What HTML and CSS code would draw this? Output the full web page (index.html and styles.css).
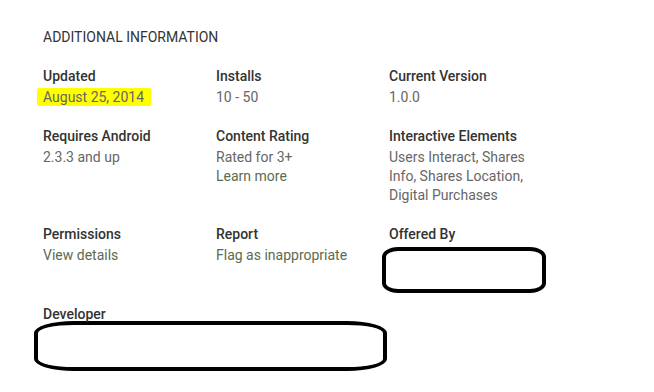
FILE: index.html
```html
<!DOCTYPE html>
<html lang="en">
<head>
    <meta charset="UTF-8">
    <meta name="viewport" content="width=device-width, initial-scale=1.0">
    <title>Additional Information</title>
    <link rel="stylesheet" href="styles.css">
</head>
<body>
    <div class="details">
        <h2 class="heading">ADDITIONAL INFORMATION</h2>
        <div class="meta-grid">
            <div class="meta">
                <div class="title">Updated</div>
                <div class="content"><span class="marker">August 25, 2014</span></div>
            </div>
            <div class="meta">
                <div class="title">Installs</div>
                <div class="content">10 - 50</div>
            </div>
            <div class="meta">
                <div class="title">Current Version</div>
                <div class="content">1.0.0</div>
            </div>

            <div class="meta">
                <div class="title">Requires Android</div>
                <div class="content">2.3.3 and up</div>
            </div>
            <div class="meta">
                <div class="title">Content Rating</div>
                <div class="content">Rated for 3+</div>
                <div class="content link">Learn more</div>
            </div>
            <div class="meta">
                <div class="title">Interactive Elements</div>
                <div class="content">Users Interact, Shares Info, Shares Location, Digital Purchases</div>
            </div>

            <div class="meta">
                <div class="title">Permissions</div>
                <div class="content link">View details</div>
            </div>
            <div class="meta">
                <div class="title">Report</div>
                <div class="content link">Flag as inappropriate</div>
            </div>
            <div class="meta">
                <div class="title">Offered By</div>
                <div class="scribble offered"></div>
            </div>
        </div>
        <div class="meta developer">
            <div class="title">Developer</div>
            <div class="scribble dev"></div>
        </div>
    </div>
</body>
</html>
```

FILE: styles.css
```css
body {
  margin: 0;
  background: #fff;
  font-family: Roboto, "Liberation Sans", sans-serif;
  font-size: 14px;
  line-height: 19px;
}

.details {
  padding: 28px 0 0 43px;
}

.heading {
  margin: 0 0 20px 0;
  font-size: 14px;
  font-weight: 400;
  line-height: 19px;
  color: #333;
}

.meta-grid {
  display: grid;
  grid-template-columns: 173px 173px 173px;
  row-gap: 20px;
}

.meta .title {
  font-weight: 500;
  color: #333;
  margin-bottom: 2px;
}

.content {
  color: #666;
  padding-right: 30px;
}

.link {
  color: #5b6b4f;
}

.marker {
  display: inline-block;
  background: #ffff00;
  margin-left: -6px;
  padding: 0 7px 0 6px;
  line-height: 18px;
  border-radius: 2px;
}

.scribble {
  box-sizing: border-box;
  border: 4px solid #000;
}

.offered {
  width: 164px;
  height: 46px;
  margin: 3px 0 0 -7px;
  border-radius: 16px / 10px;
}

.developer {
  margin-top: 12px;
}

.dev {
  width: 353px;
  height: 50px;
  margin: -5px 0 0 -9px;
  border-radius: 40px / 12px;
}
```
